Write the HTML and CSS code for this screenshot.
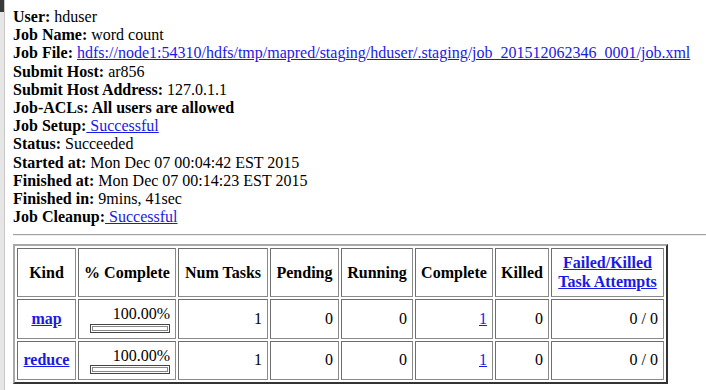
FILE: index.html
```html
<!DOCTYPE html>
<html lang="en">
<head>
  <meta charset="UTF-8">
  <title>Hadoop job_201512062346_0001 on node1</title>
  <link rel="stylesheet" href="styles.css">
</head>
<body>

<div class="window-edge"></div>

<div class="job-page">
  <div class="job-info">
    <b>User:</b> hduser<br>
    <b>Job Name:</b> word count<br>
    <b>Job File:</b> <a href="#">hdfs://node1:54310/hdfs/tmp/mapred/staging/hduser/.staging/job_201512062346_0001/job.xml</a><br>
    <b>Submit Host:</b> ar856<br>
    <b>Submit Host Address:</b> 127.0.1.1<br>
    <b>Job-ACLs: All users are allowed</b><br>
    <b>Job Setup:</b><a href="#"> Successful</a><br>
    <b>Status:</b> Succeeded<br>
    <b>Started at:</b> Mon Dec 07 00:04:42 EST 2015<br>
    <b>Finished at:</b> Mon Dec 07 00:14:23 EST 2015<br>
    <b>Finished in:</b> 9mins, 41sec<br>
    <b>Job Cleanup:</b><a href="#"> Successful</a>
  </div>

  <hr class="divider">

  <table class="task-table">
    <tr>
      <th class="col-kind">Kind</th>
      <th class="col-perc">% Complete</th>
      <th class="col-num">Num Tasks</th>
      <th class="col-pending">Pending</th>
      <th class="col-running">Running</th>
      <th class="col-complete">Complete</th>
      <th class="col-killed">Killed</th>
      <th class="col-failed"><a href="#">Failed/Killed<br>Task Attempts</a></th>
    </tr>
    <tr>
      <th><a href="#">map</a></th>
      <td>100.00%<div class="perc-graph"><div class="perc-filled"></div></div></td>
      <td>1</td>
      <td>0</td>
      <td>0</td>
      <td><a href="#">1</a></td>
      <td>0</td>
      <td>0 / 0</td>
    </tr>
    <tr>
      <th><a href="#">reduce</a></th>
      <td>100.00%<div class="perc-graph"><div class="perc-filled"></div></div></td>
      <td>1</td>
      <td>0</td>
      <td>0</td>
      <td><a href="#">1</a></td>
      <td>0</td>
      <td>0 / 0</td>
    </tr>
  </table>
</div>

</body>
</html>
```

FILE: styles.css
```css
body {
  margin: 0;
  display: flex;
  font-family: 'Liberation Serif', 'Times New Roman', serif;
  font-size: 16px;
  color: #000;
  background-color: #fff;
}

.window-edge {
  width: 4px;
  flex-shrink: 0;
  min-height: 390px;
  background: linear-gradient(#3a3a3a 0, #3a3a3a 12px, #e6e6e6 12px, #e6e6e6 100%);
  border-right: 1px solid #c8c8c8;
}

.job-page {
  flex: 1;
  padding: 8px 0 8px 8px;
  min-width: 0;
}

.job-info {
  line-height: 18.2px;
  white-space: nowrap;
}

a {
  color: #1a1ae6;
}

.divider {
  margin: 8px 0;
  border: none;
  border-top: 1px solid #a0a0a0;
  border-bottom: 1px solid #eeeeee;
}

.task-table {
  table-layout: fixed;
  width: 655px;
  border-collapse: separate;
  border-spacing: 2px;
  border: 2px solid;
  border-color: #a8a8a8 #333 #333 #a8a8a8;
}

.task-table th,
.task-table td {
  box-sizing: border-box;
  border: 1px solid;
  border-color: #6e6e6e #8a8a8a #8a8a8a #6e6e6e;
  padding: 5px;
  line-height: 18.4px;
}

.task-table th {
  font-weight: bold;
  text-align: center;
}

.task-table td {
  text-align: right;
  vertical-align: middle;
}

/* column widths, border included */
.col-kind { width: 59px; }
.col-perc { width: 98px; }
.col-num { width: 90px; }
.col-pending { width: 69px; }
.col-running { width: 72px; }
.col-complete { width: 78px; }
.col-killed { width: 54px; }
.col-failed { width: 113px; }

.perc-graph {
  width: 76px;
  height: 5px;
  margin-left: auto;
  border: 1px solid #444;
  padding: 1px;
}

.perc-filled {
  height: 3px;
  border: 1px solid #888;
}
```
